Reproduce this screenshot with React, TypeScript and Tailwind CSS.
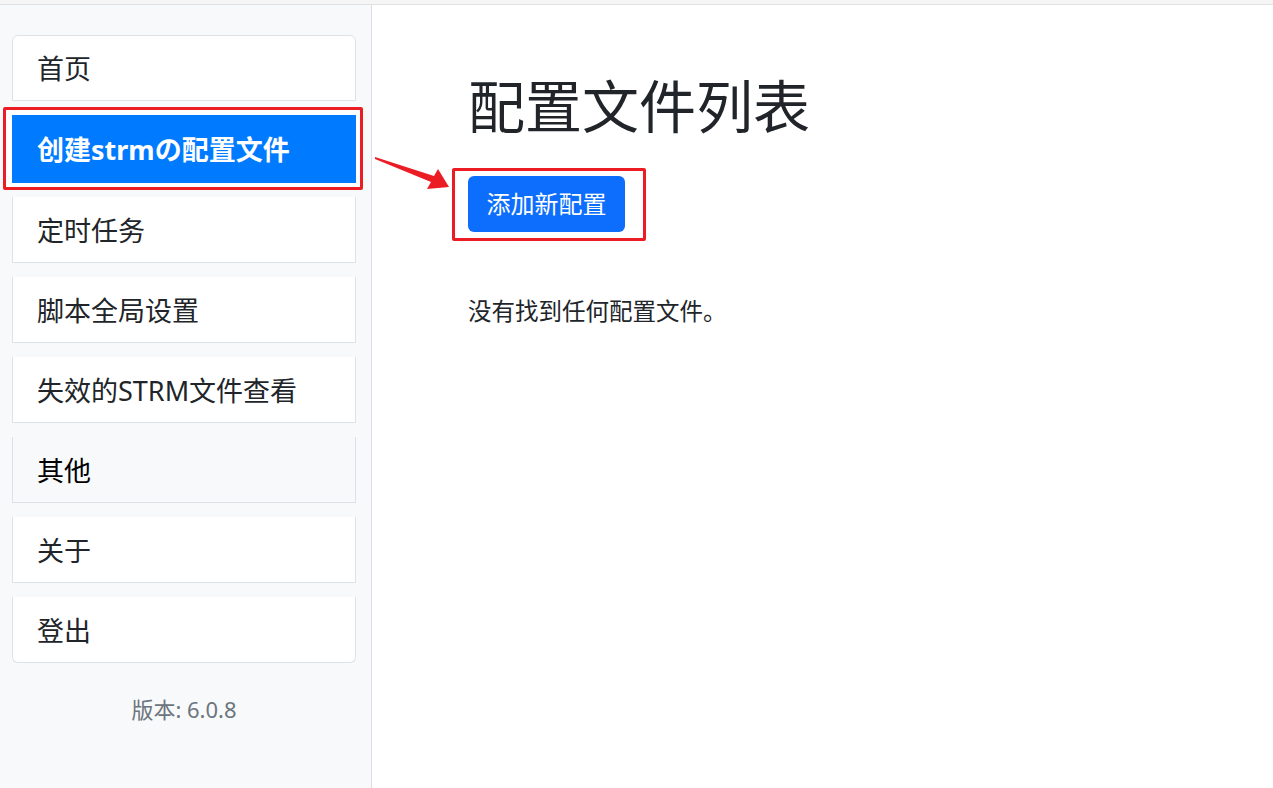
import React from "react";

const items = [
  { label: "首页" },
  { label: "创建strmの配置文件", active: true },
  { label: "定时任务" },
  { label: "脚本全局设置" },
  { label: "失效的STRM文件查看" },
  { label: "其他", header: true },
  { label: "关于" },
  { label: "登出" },
];

const NavItem = ({ label, active, header, first, last }: any) => {
  if (active) {
    return (
      <div className="relative mb-[14px]">
        {/* annotation frame */}
        <div className="absolute left-[-9px] right-[-7px] top-[-8px] bottom-[-7px] bg-white border-[3px] border-[#ec1c24] rounded-[2px]" />
        <div className="relative h-[68px] flex items-center pl-[25px] pt-[2px] bg-[#007bff] text-white font-bold text-[27px]">
          {label}
        </div>
      </div>
    );
  }
  return (
    <div
      className={
        "h-[66px] mb-[14px] flex items-center pl-[24px] pt-[3px] border-x border-b border-[#dee2e6] text-[27px] " +
        (first ? "border-t rounded-t-[6px] " : "") +
        (last ? "rounded-b-[6px] " : "") +
        (header ? "bg-[#f8f9fa] text-black" : "bg-white text-[#212529]")
      }
    >
      {label}
    </div>
  );
};

export default function App() {
  return (
    <div className="relative w-full h-[788px] overflow-hidden bg-white font-['Noto_Sans','Noto_Sans_CJK_SC',sans-serif]">
      <div className="h-[5px] bg-[#f5f5f5] border-b border-[#e2e2e2]" />
      <div className="flex h-[783px]">
        <aside className="w-[372px] shrink-0 bg-[#f8f9fa] border-r border-[#dcdce4] pt-[30px] pl-[12px]">
          <div className="w-[344px]">
            {items.map((it, i) => (
              <NavItem key={it.label} {...it} first={i === 0} last={i === items.length - 1} />
            ))}
            <p className="mt-[30px] text-center text-[22px] leading-[33px] text-[#6c757d]">版本: 6.0.8</p>
          </div>
        </aside>
        <main className="flex-1 pl-[96px] pt-[68px] text-[#212529]">
          <h1 className="text-[57px] leading-[67px] font-normal">配置文件列表</h1>
          <div className="relative mt-[36px] w-[157px]">
            <div className="absolute left-[-16px] right-[-21px] top-[-8px] bottom-[-9px] border-[3px] border-[#ec1c24] rounded-[2px]" />
            <button className="relative h-[56px] w-[157px] rounded-[6px] bg-[#0d6efd] text-white text-[24px]">
              添加新配置
            </button>
          </div>
          <p className="mt-[62px] text-[23.5px] leading-[34px]">没有找到任何配置文件。</p>
        </main>
      </div>
      <svg className="absolute left-0 top-0 pointer-events-none" width="1273" height="788">
        <polygon points="375,157 434,176 438,169 449,187 427,189 431,182 375,159" fill="#ec1c24" />
      </svg>
    </div>
  );
}
